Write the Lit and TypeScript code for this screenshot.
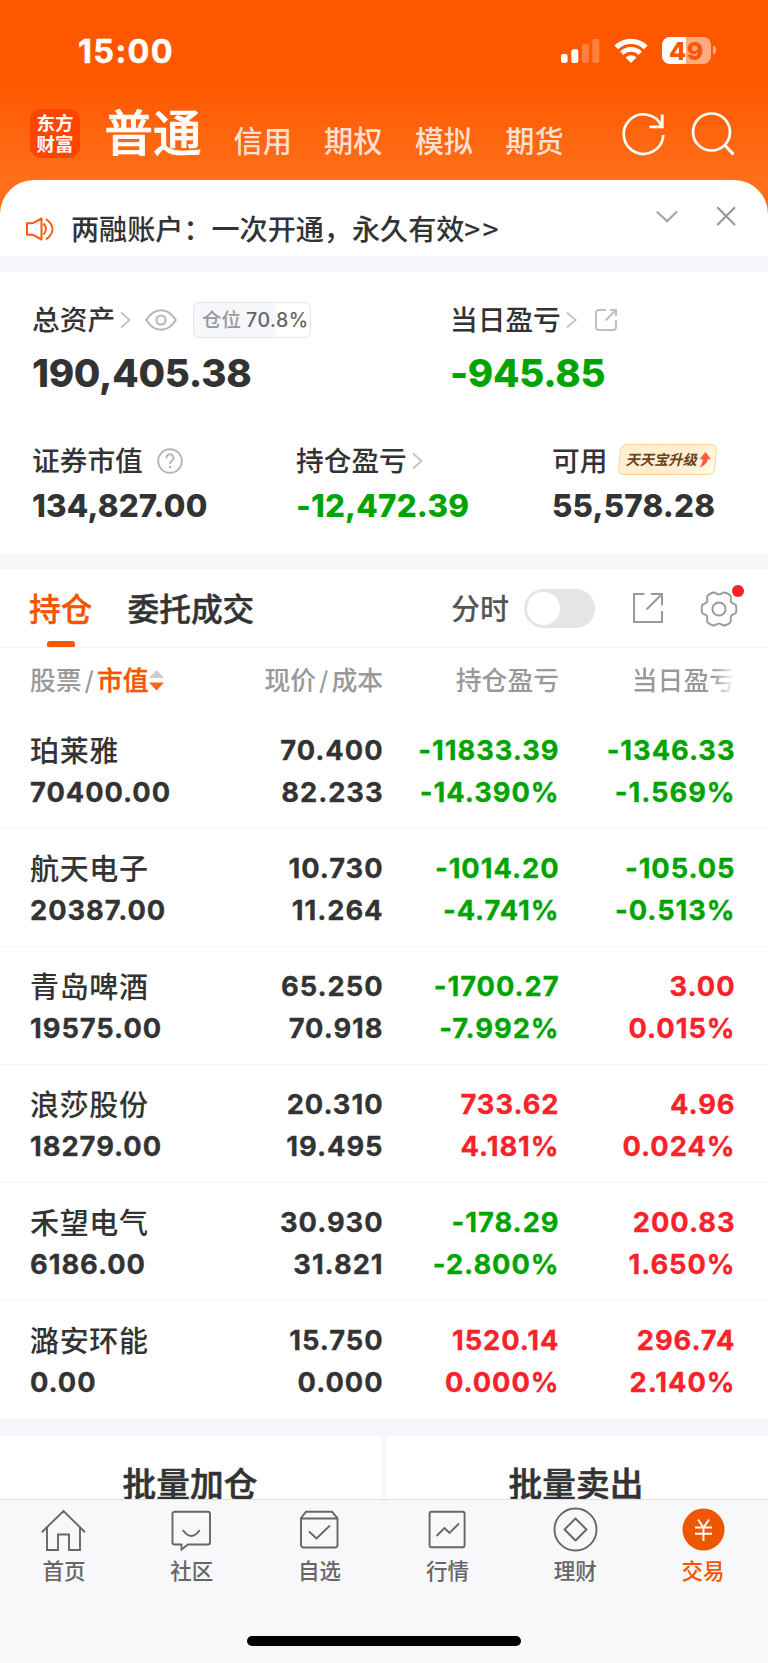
import { LitElement, html, css, svg } from "lit";
import { customElement, property } from "lit/decorators.js";

type Tone = "up" | "down" | "flat";

interface Holding {
  name: string;
  value: string;
  price: string;
  cost: string;
  total: string;
  totalPct: string;
  totalTone: Tone;
  day: string;
  dayPct: string;
  dayTone: Tone;
}

const HOLDINGS: Holding[] = [
  { name: "珀莱雅", value: "70400.00", price: "70.400", cost: "82.233", total: "-11833.39", totalPct: "-14.390%", totalTone: "down", day: "-1346.33", dayPct: "-1.569%", dayTone: "down" },
  { name: "航天电子", value: "20387.00", price: "10.730", cost: "11.264", total: "-1014.20", totalPct: "-4.741%", totalTone: "down", day: "-105.05", dayPct: "-0.513%", dayTone: "down" },
  { name: "青岛啤酒", value: "19575.00", price: "65.250", cost: "70.918", total: "-1700.27", totalPct: "-7.992%", totalTone: "down", day: "3.00", dayPct: "0.015%", dayTone: "up" },
  { name: "浪莎股份", value: "18279.00", price: "20.310", cost: "19.495", total: "733.62", totalPct: "4.181%", totalTone: "up", day: "4.96", dayPct: "0.024%", dayTone: "up" },
  { name: "禾望电气", value: "6186.00", price: "30.930", cost: "31.821", total: "-178.29", totalPct: "-2.800%", totalTone: "down", day: "200.83", dayPct: "1.650%", dayTone: "up" },
  { name: "潞安环能", value: "0.00", price: "15.750", cost: "0.000", total: "1520.14", totalPct: "0.000%", totalTone: "up", day: "296.74", dayPct: "2.140%", dayTone: "up" },
];

const icon = (w: number, h: number, body: unknown, cls = "") =>
  html`<svg class="ic ${cls}" width=${w} height=${h} viewBox="0 0 ${w} ${h}" fill="none">${body}</svg>`;

const chevron = () => icon(12, 18, svg`<path d="M1 1.500L9.500 9L1 16.500" stroke="#c4c4c4" stroke-width="1.900"/>`, "chev");

const base = css`
  * { box-sizing: border-box; }
  :host {
    display: block;
    font-family: "Inter", "Noto Sans CJK SC", sans-serif;
    color: #333;
    white-space: nowrap;
  }
  .ic { display: block; flex: none; overflow: visible; }
`;

@customElement("top-bar")
class TopBar extends LitElement {
  static styles = [base, css`
    :host { height: 220px; background: linear-gradient(#ff5700 0, #ff5700 76px, #ff6f1a 180px, #ff701c 220px); color: #fff; }
    .status { height: 84px; display: flex; align-items: flex-start; padding: 35px 52px 0 78px; }
    .time { font-size: 32.500px; font-weight: 700; line-height: 34px; letter-spacing: 1.300px; flex: 1; -webkit-text-stroke: 0.400px #fff; }
    .sig { margin: 4px 15px 0 0; }
    .wifi { margin: 4px 14px 0 0; }
    .bat { margin-top: 2px; width: 49px; height: 27px; border-radius: 8px; background: linear-gradient(90deg, #fff 50%, #ffab80 50%); color: #ff5700; font-size: 25px; line-height: 28px; font-weight: 800; text-align: center; letter-spacing: 0.500px; }
    .tip { margin: 11px 0 0 2px; width: 3px; height: 8px; border-radius: 0 4px 4px 0; background: #ffab80; }
    .nav { display: flex; height: 96px; align-items: flex-start; padding-left: 30px; }
    .logo { margin-top: 25px; width: 50px; height: 49px; border-radius: 11px; background: #ff4500; font-size: 18.500px; line-height: 20.500px; font-weight: 700; text-align: center; padding-top: 4px; }
    .cur { margin: 20px 0 0 24.500px; width: 97.500px; font-size: 48.500px; line-height: 60px; font-weight: 500; -webkit-text-stroke: 0.700px #fff; }
    .tab { margin: 38px 0 0; width: 90.600px; font-size: 29.200px; line-height: 40px; font-weight: 500; color: #ffdfcf; }
    .tabs { display: flex; margin-left: 31.500px; width: 388.500px; }
    .refresh { margin-top: 28px; }
    .search { margin: 28px 0 0 26px; }
  `];
  render() {
    return html`
      <div class="status">
        <div class="time">15:00</div>
        ${icon(39, 24, svg`<rect x="1" y="15" width="6.600" height="9" rx="2" fill="#fff"/><rect x="11.300" y="10.300" width="7" height="13.700" rx="2" fill="#fff"/><rect x="22" y="5" width="7" height="19" rx="2" fill="#fff" opacity=".25"/><rect x="32.300" y="0" width="7" height="24" rx="2" fill="#fff" opacity=".25"/>`, "sig")}
        ${icon(34, 24, svg`<path d="M2.300 8.300A21 21 0 0 1 31.700 8.300" stroke="#fff" stroke-width="5.200"/><path d="M7.800 14.200A13 13 0 0 1 26.200 14.200" stroke="#fff" stroke-width="4.800"/><path d="M17 24L11.500 18.600Q17 14 22.500 18.600Z" fill="#fff"/>`, "wifi")}
        <div class="bat">49</div><div class="tip"></div>
      </div>
      <div class="nav">
        <div class="logo">东方<br />财富</div>
        <div class="cur">普通</div>
        <div class="tabs">${["信用", "期权", "模拟", "期货"].map((t) => html`<div class="tab">${t}</div>`)}</div>
        ${icon(44, 44, svg`<path d="M41.300 23A19.800 19.800 0 1 1 39.800 14.500" stroke="#fff" stroke-width="2.700"/><path d="M40.200 2.500V14.900H27.500" stroke="#fff" stroke-width="2.900"/>`, "refresh")}
        ${icon(43, 44, svg`<circle cx="19.500" cy="20" r="18.500" stroke="#fff" stroke-width="2.700"/><path d="M32.500 33L41.500 42.300" stroke="#fff" stroke-width="3.200"/>`, "search")}
      </div>`;
  }
}

@customElement("notice-bar")
class NoticeBar extends LitElement {
  static styles = [base, css`
    :host { height: 76.500px; margin-top: -40.500px; background: #fff; border-radius: 34px 34px 0 0; position: relative; display: flex; padding-left: 25px; }
    .horn { margin-top: 37px; }
    .msg { margin: 28px 0 0 18px; width: 584px; font-size: 28.100px; line-height: 40px; font-weight: 500; }
    .msg span { font-family: "Noto Sans CJK SC", sans-serif; letter-spacing: 2.200px; }
    .down { margin-top: 30px; margin-right: 39px; }
    .close { margin-top: 26.500px; }
  `];
  render() {
    return html`
      ${icon(28, 24, svg`<path d="M2 6.200H8L16.500 1.500V22.500L8 17.800H2Z" stroke="#ff5a0a" stroke-width="2" stroke-linejoin="round"/><path d="M18.500 6.500Q23.500 12 18.500 17.500M21 2Q34 12 21 22.500" stroke="#ff5a0a" stroke-width="1.900"/>`, "horn")}
      <div class="msg">两融账户：一次开通，永久有效<span>&gt;&gt;</span></div>
      ${icon(22, 13, svg`<path d="M1.800 1.500L12 11.200L22 1.500" stroke="#a5a5a5" stroke-width="2.200"/>`, "down")}
      ${icon(20, 20, svg`<path d="M1.300 1.300L19 19M19 1.300L1.300 19" stroke="#999" stroke-width="2.200"/>`, "close")}`;
  }
}

@customElement("asset-summary")
class AssetSummary extends LitElement {
  static styles = [base, css`
    :host { height: 281.500px; background: #fff; padding-top: 26px; }
    .row { display: flex; padding-left: 32px; }
    .row + .row { margin-top: 35px; }
    .row + .row .mid { margin-top: 1px; }
    .lab { height: 44px; display: flex; align-items: center; font-size: 27.700px; line-height: 43px; font-weight: 500; }
    .lab > span { display: block; }
    .chev { margin-left: 5px; margin-top: -1px; }
    .big { font-size: 38.500px; line-height: 62px; font-weight: 800; letter-spacing: -0.300px; }
    .mid { font-size: 31.300px; line-height: 44px; font-weight: 800; letter-spacing: 0.200px; }
    .down { color: #00a400; }
    .a { width: 418px; } .c { width: 264px; } .d { width: 256px; }
    .eye { margin-left: 13px; margin-top: -1px; }
    .tag { margin-left: 16px; width: 118px; height: 36px; border: 1px solid #e6e6ea; border-radius: 6px; background: linear-gradient(90deg, #f6f7fa 71%, #fff 71%); display: flex; align-items: center; padding-left: 8px; font-size: 19.500px; color: #999; }
    .tag b { font-weight: 500; color: #666; margin-left: 5px; letter-spacing: 0.500px; }
    .share { margin-left: 17px; }
    .q { margin-left: 14px; }
    .promo { margin-left: 12px; position: relative; display: flex; align-items: center; width: 97px; height: 31px; margin-top: -3px; padding-left: 6px; }
    .promo::before { content: ""; position: absolute; inset: 0; border: 1.800px solid #fdd88a; border-radius: 6px; background: linear-gradient(135deg, #fff0d0, #feedcf 60%, #fffbe9); transform: skewX(-6deg); }
    .promo i { position: relative; font-size: 14.300px; font-weight: 600; color: #6d4020; }
    .arrow { position: relative; margin-left: 1px; }
  `];
  render() {
    return html`
      <div class="row">
        <div class="a">
          <div class="lab"><span>总资产</span>${chevron()}
            ${icon(32, 22, svg`<path d="M1.200 11Q7.500 1.200 16 1.200T30.800 11Q24.500 20.800 16 20.800T1.200 11Z" stroke="#b5b5b5" stroke-width="2"/><circle cx="16" cy="11" r="4.600" stroke="#b5b5b5" stroke-width="2"/>`, "eye")}
            <div class="tag">仓位<b>70.8%</b></div>
          </div>
          <div class="big">190,405.38</div>
        </div>
        <div>
          <div class="lab"><span>当日盈亏</span>${chevron()}
            ${icon(22, 22, svg`<path d="M11 1H4A3 3 0 0 0 1 4V18A3 3 0 0 0 4 21H18A3 3 0 0 0 21 18V11M15 1H21V7M21 1L10.500 11.500" stroke="#c0c0c0" stroke-width="2"/>`, "share")}
          </div>
          <div class="big down">-945.85</div>
        </div>
      </div>
      <div class="row">
        <div class="c">
          <div class="lab"><span>证券市值</span>
            ${icon(26, 26, svg`<circle cx="13" cy="13" r="11.800" stroke="#b5b5b5" stroke-width="1.900"/><path d="M9.500 10.300A3.500 3.500 0 1 1 14.800 12.800Q13 14 13 16" stroke="#b5b5b5" stroke-width="1.900"/><circle cx="13" cy="19" r="1.300" fill="#b5b5b5"/>`, "q")}
          </div>
          <div class="mid">134,827.00</div>
        </div>
        <div class="d">
          <div class="lab"><span>持仓盈亏</span>${chevron()}</div>
          <div class="mid down">-12,472.39</div>
        </div>
        <div>
          <div class="lab"><span>可用</span>
            <div class="promo"><i>天天宝升级</i>
              ${icon(13, 18, svg`<path d="M7.500 1L13 8.300H9.800Q9 14 1 16.800Q4.800 13 4.600 8.300H1.500Z" fill="#ff5a3c"/>`, "arrow")}
            </div>
          </div>
          <div class="mid">55,578.28</div>
        </div>
      </div>`;
  }
}

@customElement("holdings-table")
class HoldingsTable extends LitElement {
  @property({ attribute: false }) rows: Holding[] = [];
  static styles = [base, css`
    :host { background: #fff; }
    .tabs { height: 79px; display: flex; border-bottom: 1.500px solid #f4f4f6; font-size: 31.700px; line-height: 81px; font-weight: 500; padding-left: 29px; }
    .on { color: #f45500; width: 98.500px; display: flex; flex-direction: column; -webkit-text-stroke: 0.400px #f45500; }
    .on::after { content: ""; width: 28px; height: 6px; margin: -9px 0 0 17.500px; border-radius: 3px 3px 1px 1px; background: #f05a08; flex: none; }
    .orders { width: 323.500px; -webkit-text-stroke: 0.400px #333; }
    .fs { font-size: 29px; color: #555; width: 73px; line-height: 81px; }
    .sw { margin-top: 20px; width: 71px; height: 39px; border-radius: 20px; background: #e5e5e7; padding: 3px; }
    .sw::after { content: ""; display: block; width: 33px; height: 33px; border-radius: 50%; background: #fff; }
    .out { margin: 24px 0 0 38px; }
    .gearbox { position: relative; margin: 22px 0 0 37.500px; width: 36px; height: 36px; }
    .dot { position: absolute; left: 31.500px; top: -6px; width: 12px; height: 12px; border-radius: 50%; background: #fa2128; }
    .grid { display: grid; grid-template-columns: 183.500px 170px 176px 176px; padding-left: 30px; text-align: right; }
    .head { height: 63px; font-size: 25.800px; line-height: 65px; color: #999; grid-template-columns: 183px 170px 176px 176px; font-weight: 500; }
    .left { text-align: left; }
    .sort { display: flex; }
    .sort b { color: #f45500; font-weight: 500; -webkit-text-stroke: 0.400px #f45500; }
    .sl { padding: 0 3px; font-weight: 400; }
    .tri { margin-top: 22px; }
    .fade { background: linear-gradient(90deg, #999 78%, #fff 100%); -webkit-background-clip: text; background-clip: text; color: transparent; }
    .row { height: 118.100px; padding-top: 18.500px; border-bottom: 1.500px solid #f4f4f6; font-size: 27.300px; line-height: 42.500px; font-weight: 700; letter-spacing: 0.950px; -webkit-text-stroke: 0.300px currentColor; }
    .name { font-size: 29px; font-weight: 500; letter-spacing: 0.650px; line-height: 43.500px; margin-bottom: -1px; -webkit-text-stroke: 0; }
    .up { color: #f8222a; }
    .down { color: #00a400; }
  `];
  render() {
    return html`
      <div class="tabs">
        <div class="on">持仓</div><div class="orders">委托成交</div>
        <div class="fs">分时</div><div class="sw"></div>
        ${icon(30, 30, svg`<path d="M11.500 1H1V29H29V18M18 1H29V12.500M29 1L13.500 16.500" stroke="#999" stroke-width="2"/>`, "out")}
        <div class="gearbox">
          ${icon(36, 36, svg`<path d="M18 3.400C20.500 3.400 21.500 1 23.800 1.500C26.300 2.200 28.400 3.400 29.500 4.800C30.800 6.500 29 8.500 30 10.800C31.300 13.300 34.600 12.500 35.100 14.500Q35.500 18 35.100 21.500C34.600 23.500 31.300 22.700 30 25.200C29 27.500 30.800 29.500 29.500 31.200C28.400 32.600 26.300 33.800 23.800 34.500C21.500 35 20.500 32.600 18 32.600S14.500 35 12.200 34.500C9.700 33.800 7.600 32.600 6.500 31.200C5.200 29.500 7 27.500 6 25.200C4.700 22.700 1.400 23.500 .9 21.500Q.5 18 .9 14.500C1.400 12.500 4.700 13.300 6 10.800C7 8.500 5.200 6.500 6.500 4.800C7.600 3.400 9.700 2.200 12.200 1.500C14.500 1 15.500 3.400 18 3.400Z" stroke="#999" stroke-width="1.900"/><circle cx="18" cy="18" r="6.600" stroke="#999" stroke-width="2"/>`)}
          <div class="dot"></div>
        </div>
      </div>
      <div class="grid head">
        <div class="left sort">股票<span class="sl">/</span><b>市值</b>${icon(15, 21, svg`<path d="M7.500 0L15 8H0Z" fill="#ccc"/><path d="M7.500 20.500L15 12.500H0Z" fill="#ff6614"/>`, "tri")}</div>
        <div>现价<span class="sl">/</span>成本</div>
        <div>持仓盈亏</div>
        <div><span class="fade">当日盈亏</span></div>
      </div>
      ${this.rows.map((r) => html`
        <div class="grid row">
          <div class="left"><div class="name">${r.name}</div><div>${r.value}</div></div>
          <div><div>${r.price}</div><div>${r.cost}</div></div>
          <div class=${r.totalTone}><div>${r.total}</div><div>${r.totalPct}</div></div>
          <div class=${r.dayTone}><div>${r.day}</div><div>${r.dayPct}</div></div>
        </div>`)}`;
  }
}

const S = "#666";
const NAV = [
  { label: "首页", art: svg`<path d="M.8 25.200L22.500 4L44 25.200M6 20.500V43H17V27.500H28V43H39V20.500" stroke="${S}" stroke-width="1.900"/>` },
  { label: "社区", art: svg`<path d="M5.500 4.800H39A2 2 0 0 1 41 6.800V35.500A2 2 0 0 1 39 37.500H19L12.500 42.500V37.500H5.500A2 2 0 0 1 3.500 35.500V6.800A2 2 0 0 1 5.500 4.800ZM13.800 23Q22.300 35 30.800 23" stroke="${S}" stroke-width="1.900"/>` },
  { label: "自选", art: svg`<path d="M4 11L9 4.800H35L40.500 11V38A2.500 2.500 0 0 1 38 40.500H6.500A2.500 2.500 0 0 1 4 38ZM4 11.500H40.500M12 24.500L19.500 31.500L33 18.500" stroke="${S}" stroke-width="1.900"/>` },
  { label: "行情", art: svg`<rect x="4.600" y="4.800" width="35" height="35.500" rx="2" stroke="${S}" stroke-width="1.900"/><path d="M11.500 29L19.500 21L24.500 26L34 16.500" stroke="${S}" stroke-width="1.900"/>` },
  { label: "理财", art: svg`<circle cx="22.500" cy="22.500" r="21" stroke="${S}" stroke-width="1.900"/><path d="M22.500 11.500L33.500 22.500L22.500 33.500L11.500 22.500Z" stroke="${S}" stroke-width="1.900" stroke-linejoin="round"/>` },
  { label: "交易", on: true, art: svg`<circle cx="22.500" cy="22.500" r="21" fill="#ee5702"/><path d="M17 12.500L22.500 20.500L28 12.500M22.500 20.500V34M14 20.500H31M14 26.700H31" stroke="#fff" stroke-width="1.900"/>` },
];

@customElement("bottom-nav")
class BottomNav extends LitElement {
  static styles = [base, css`
    :host { height: 165px; background: #f8f8fb; border-top: 1px solid #dedee4; }
    .items { display: flex; height: 137px; padding: 7px 1px 0 0; }
    .item { flex: 1; display: flex; flex-direction: column; align-items: center; font-size: 21.500px; line-height: 34px; color: #666; font-weight: 500; }
    .item span { margin-top: 2px; }
    .on { color: #f45500; }
    .bar { width: 274px; height: 10px; border-radius: 5px; background: #000; margin: -1px auto 0; }
  `];
  render() {
    return html`<div class="items">${NAV.map((n) => html`<div class="item ${n.on ? "on" : ""}">${icon(45, 45, n.art)}<span>${n.label}</span></div>`)}</div><div class="bar"></div>`;
  }
}

@customElement("app-root")
class AppRoot extends LitElement {
  static styles = [base, css`
    :host { width: 768px; height: 1663px; background: #f6f7fa; display: flex; flex-direction: column; overflow: hidden; }
    top-bar, notice-bar, asset-summary, holdings-table, bottom-nav { flex: none; }
    asset-summary { margin-top: 16px; }
    holdings-table { margin-top: 15.500px; }
    .batch { margin-top: 16px; height: 63px; display: flex; gap: 4px; overflow: hidden; flex: none; }
    .batch div { flex: 1; background: #fff; text-align: center; font-size: 33.700px; line-height: 98px; font-weight: 500; padding-right: 2px; -webkit-text-stroke: 0.600px #333; }
  `];
  render() {
    return html`
      <top-bar></top-bar>
      <notice-bar></notice-bar>
      <asset-summary></asset-summary>
      <holdings-table .rows=${HOLDINGS}></holdings-table>
      <div class="batch"><div>批量加仓</div><div>批量卖出</div></div>
      <bottom-nav></bottom-nav>`;
  }
}
